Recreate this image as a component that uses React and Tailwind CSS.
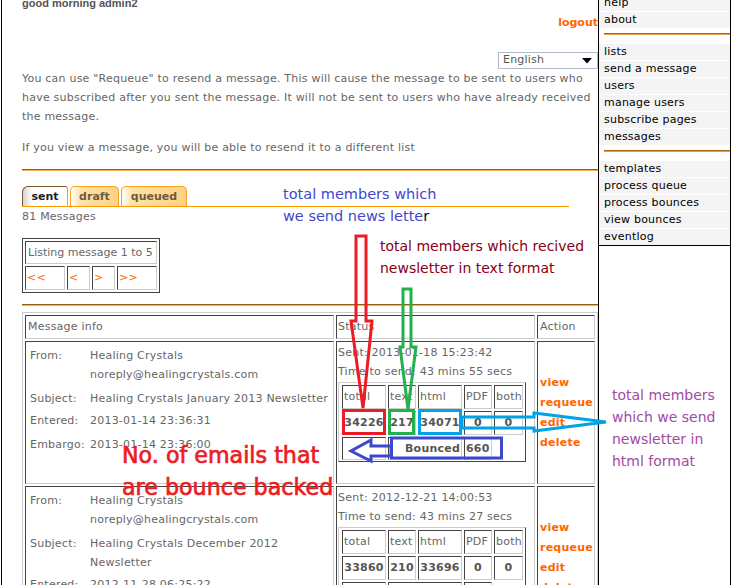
import React from 'react';

const menuTop = ['help', 'about'];
const menuMid = ['lists', 'send a message', 'users', 'manage users', 'subscribe pages', 'messages'];
const menuLow = ['templates', 'process queue', 'process bounces', 'view bounces', 'eventlog'];

const messages = [
  {
    id: 1,
    from: 'Healing Crystals',
    email: 'noreply@healingcrystals.com',
    subject: ['Healing Crystals January 2013 Newsletter'],
    entered: '2013-01-14 23:36:31',
    embargo: '2013-01-14 23:36:00',
    sent: '2013-01-18 15:23:42',
    time: '43 mins 55 secs',
    stats: ['34226', '217', '34071', '0', '0'],
    bounced: '660',
  },
  {
    id: 2,
    from: 'Healing Crystals',
    email: 'noreply@healingcrystals.com',
    subject: ['Healing Crystals December 2012', 'Newsletter'],
    entered: '2012-11-28 06:25:22',
    embargo: '2012-11-28 06:25:00',
    sent: '2012-12-21 14:00:53',
    time: '43 mins 27 secs',
    stats: ['33860', '210', '33696', '0', '0'],
    bounced: '612',
  },
];

// inset cell border like an old html table with border=1
const cell = 'border border-t-[#444] border-l-[#444] border-r-[#ccc] border-b-[#ccc]';

const Rule = ({ className }) => (
  <div className={`h-[2px] border-t border-[#9a5c06] bg-[#f3b15a] ${className}`} />
);

const MenuRow = ({ label, last }) => (
  <div className={`h-[16px] bg-[#f4f4f4] pl-[5px] leading-[16px] whitespace-nowrap ${last ? '' : 'mb-px'}`}>
    {label}
  </div>
);

const Annotations = () => (
  <div className="tracking-normal">
    <svg className="pointer-events-none absolute left-0 top-0" width="732" height="585" fill="none" strokeWidth="3">
      <polygon points="356,236 366,236 366,321 372,321 363,408 351,321 356,321" stroke="#ed1c24" />
      <rect x="343.5" y="410.5" width="41" height="23" stroke="#ed1c24" />
      <polygon points="403,289 411,289 411,347 416,347 408,409 400,347 403,347" stroke="#22b14c" />
      <rect x="389.5" y="410.5" width="24" height="23" stroke="#22b14c" />
      <rect x="419.5" y="410.5" width="41" height="23" stroke="#00a2e8" />
      <polygon points="462,417 534,417 534,413 606,422 534,431 534,428 462,428" stroke="#00a2e8" />
      <rect x="391.5" y="438" width="110" height="20" stroke="#3f48cc" />
      <polygon points="391,446 371,446 371,440 351,451 371,461 371,456 391,456" stroke="#3f48cc" />
    </svg>
    <div className="absolute left-[283px] top-[184px] text-[14.5px] leading-[21.5px] text-[#3f48cc] whitespace-nowrap">
      total members which<br />we send news lette<span className="text-black">r</span>
    </div>
    <div className="absolute left-[380px] top-[236px] text-[14px] leading-[21.7px] text-[#880015] whitespace-nowrap">
      total members which recived<br />newsletter in text format
    </div>
    <div className="absolute left-[612px] top-[384px] text-[14px] leading-[22px] text-[#a349a4] whitespace-nowrap">
      total members<br />which we send<br />newsletter in<br />html format
    </div>
    <div className="absolute left-[122px] top-[439px] text-[22.2px] leading-[32px] text-[#ed1c24] whitespace-nowrap [-webkit-text-stroke:0.7px_#ed1c24]">
      No. of emails that<br />are bounce backed
    </div>
  </div>
);

const StatsTable = ({ stats, bounced }) => (
  <div className="mt-px grid w-[188px] grid-cols-[44px_28px_44px_28px_29px] gap-[2px] border border-t-[#ccc] border-l-[#ccc] border-r-[#444] border-b-[#444] pb-px pl-[3px] pr-[2px] pt-[2px]">
    {['total', 'text', 'html', 'PDF', 'both'].map((h) => (
      <div key={h} className={`${cell} h-[24px] pl-px leading-[22px]`}>{h}</div>
    ))}
    {stats.map((s, i) => (
      <div key={i} className={`${cell} h-[24px] text-center font-bold leading-[22px] text-[#555]`}>{s}</div>
    ))}
    <div className={`${cell} h-[23px]`} />
    <div className={`${cell} col-span-2 h-[23px] pr-px text-right font-bold leading-[21px] text-[#555]`}>Bounced</div>
    <div className={`${cell} h-[23px] pl-px font-bold leading-[21px] text-[#555]`}>{bounced}</div>
  </div>
);

const MessageRow = ({ m }) => (
  <>
    <div className={`${cell} h-[143px] pl-[4px] pt-[4px] leading-[19px]`}>
      <div className="flex">
        <span className="w-[60px] shrink-0">From:</span>
        <span>{m.from}<br />{m.email}</span>
      </div>
      <div className="mt-[5px] flex">
        <span className="w-[60px] shrink-0">Subject:</span>
        <span className="whitespace-nowrap">
          {m.subject.map((s, i) => (
            <React.Fragment key={i}>{i > 0 && <br />}{s}</React.Fragment>
          ))}
        </span>
      </div>
      <div className="mt-[3px] flex">
        <span className="w-[60px] shrink-0">Entered:</span>
        <span>{m.entered}</span>
      </div>
      <div className="mt-[5px] flex">
        <span className="w-[60px] shrink-0">Embargo:</span>
        <span>{m.embargo}</span>
      </div>
    </div>
    <div className={`${cell} h-[143px] pl-px pt-px leading-[19px]`}>
      <div>Sent: {m.sent}</div>
      <div className="whitespace-nowrap">Time to send: {m.time}</div>
      <StatsTable stats={m.stats} bounced={m.bounced} />
    </div>
    <div className={`${cell} flex h-[143px] flex-col justify-center pl-[2px] font-bold leading-[20px] text-[#ff6600]`}>
      <span>view</span>
      <span>requeue</span>
      <span>edit</span>
      <span>delete</span>
    </div>
  </>
);

export default function App() {
  return (
    <div className="relative flex h-[585px] w-[732px] overflow-hidden bg-white font-['DejaVu_Sans',sans-serif] text-[11px] tracking-[0.22px] text-[#666]">
      <div className="w-px shrink-0" />

      <main className="w-[597px] shrink-0 border-l border-black pl-[20px]">
        <div className="-mt-[4px] font-['Liberation_Sans',Arial,sans-serif] text-[11px] font-bold leading-[14px] tracking-normal text-[#555]">
          good morning admin2
        </div>
        <div className="mt-[6px] text-right font-bold leading-[14px] tracking-normal text-[#ff6600]">logout</div>

        <div className="ml-auto mt-[22px] flex h-[17px] w-[100px] items-center justify-between border border-[#b5b8c8] pl-[4px] pr-[5px] text-[#555]">
          <span>English</span>
          <svg width="10" height="6" viewBox="0 0 10 6">
            <polygon points="0,0 10,0 5,5.5" fill="#000" />
          </svg>
        </div>

        <p className="whitespace-nowrap leading-[19px]">
          You can use "Requeue" to resend a message. This will cause the message to be sent to users who<br />
          have subscribed after you sent the message. It will not be sent to users who have already received<br />
          the message.
        </p>
        <p className="mt-[12px] leading-[19px]">If you view a message, you will be able to resend it to a different list</p>

        <Rule className="mt-[12px]" />

        {/* tabs */}
        <div className="mt-[15px] flex w-[547px] items-end gap-[2px] border-b border-[#f90] font-bold tracking-normal">
          <div className="h-[20px] w-[46px] rounded-tl-[6px] rounded-tr-[3px] border-l border-r border-t border-l-[#7a5c2e] border-t-[#7a5c2e] border-r-[#f0a030] bg-[linear-gradient(90deg,#d4d4d4_0px,#fff_9px)] text-center leading-[19px] text-[#222]">
            sent
          </div>
          <div className="h-[20px] w-[49px] rounded-t-[5px] border-l border-r border-t border-[#f5a31f] bg-[linear-gradient(90deg,#fff_0px,#ffe2a8_10px,#ffd182_100%)] text-center leading-[19px] text-[#6e5c3e]">
            draft
          </div>
          <div className="h-[20px] w-[66px] rounded-t-[5px] border-l border-r border-t border-[#f5a31f] bg-[linear-gradient(90deg,#fff_0px,#ffe2a8_10px,#ffd182_100%)] text-center leading-[19px] text-[#6e5c3e]">
            queued
          </div>
        </div>
        <div className="mt-[3px] leading-[14px]">81 Messages</div>

        {/* paging */}
        <div className="mt-[14px] flex w-[138px] flex-col gap-[2px] border border-[#444] p-[2px]">
          <div className={`${cell} h-[23px] pl-[2px] leading-[21px] tracking-normal whitespace-nowrap`}>Listing message 1 to 5</div>
          <div className="flex gap-[2px] text-[#ff6600]">
            <div className={`${cell} h-[24px] w-[40px] pl-px leading-[22px]`}>&lt;&lt;</div>
            <div className={`${cell} h-[24px] w-[23px] pl-px leading-[22px]`}>&lt;</div>
            <div className={`${cell} h-[24px] w-[23px] pl-px leading-[22px]`}>&gt;</div>
            <div className={`${cell} h-[24px] w-[40px] pl-px leading-[22px]`}>&gt;&gt;</div>
          </div>
        </div>

        <Rule className="mt-[11px]" />

        {/* messages */}
        <div className="mt-[6px] grid w-[576px] grid-cols-[309px_199px_58px] gap-[2px] border border-[#ccc] p-[2px]">
          <div className={`${cell} h-[24px] pl-[2px] leading-[22px]`}>Message info</div>
          <div className={`${cell} h-[24px] pl-px leading-[22px]`}>Status</div>
          <div className={`${cell} h-[24px] pl-[2px] leading-[22px]`}>Action</div>
          {messages.map((m) => (
            <MessageRow key={m.id} m={m} />
          ))}
        </div>
      </main>

      <aside className="w-[133px] shrink-0 self-stretch border-x border-black text-black">
        <div className="border-b border-black">
          <div className="-mt-[5px]">
            {menuTop.map((l) => (
              <MenuRow key={l} label={l} />
            ))}
          </div>
          <div className="ml-[5px] mt-[5px] h-[2px] border-t border-[#a8650a] bg-[#e6a04a]" />
          <div className="mt-[9px]">
            {menuMid.map((l) => (
              <MenuRow key={l} label={l} />
            ))}
          </div>
          <div className="ml-[5px] mt-[5px] h-[2px] border-t border-[#a8650a] bg-[#e6a04a]" />
          <div className="mt-[9px]">
            {menuLow.map((l, i) => (
              <MenuRow key={l} label={l} last={i === menuLow.length - 1} />
            ))}
          </div>
        </div>
      </aside>

      <Annotations />
    </div>
  );
}
